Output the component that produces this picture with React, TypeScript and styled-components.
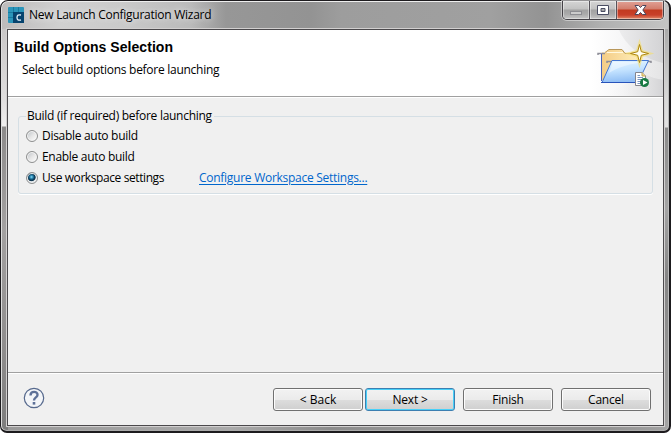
import React from 'react';
import styled, { createGlobalStyle, css } from 'styled-components';

const Global = createGlobalStyle`
  * { box-sizing: border-box; }
  html, body { margin: 0; background: #fff; }
  body { width: 671px; height: 433px; overflow: hidden; }
`;

const Label = styled.span<{ $spacing?: number }>`
  font: 12px/16px "Open Sans", "Noto Sans", sans-serif;
  letter-spacing: ${p => p.$spacing ?? -0.3}px;
  color: #000;
  white-space: nowrap;
`;

const Window = styled.div`
  width: 671px;
  height: 433px;
  border: 1px solid #1d1b1e;
  border-right-width: 2px;
  border-bottom-width: 2px;
  border-radius: 8px 8px 7px 7px;
  padding: 0 5px 5px 5px;
  display: flex;
  flex-direction: column;
  box-shadow: inset 0 1px #eee, inset 1px 0 #ddd, inset -1px 0 #bbb, inset 0 -1px #aaa;
  background:
    linear-gradient(#c9c7c7 0, #e0dede 70px, #f0efef 97px, #8d8b8b 98px, #a3a1a1 200px, #8f8d8d 320px, #777 100%) 0 28px / 7px 100% no-repeat,
    linear-gradient(#aaa 0, #d8d8d8 70px, #e2e2e2 98px, #8b8b8b 99px, #a4a4a4 180px, #858585 250px, #aaa 100%) 100% 28px / 7px 100% no-repeat,
    linear-gradient(90deg, #999, #aaa 230px, #8c8c8c 330px, #999 430px, #929292 600px, #a2a2a2) 0 100% / 100% 7px no-repeat,
    linear-gradient(90deg, #bdbbbb 0, #d0d0d0 60px, #cacaca 120px, #bababa 190px, #979797 225px, #939393 310px, #9d9d9d 340px, #a0a0a0 490px, #939393 545px, #b0b0b0 600px, #c4c4c4 100%);
`;

const TitleBar = styled.div`
  height: 28px;
  flex: none;
  display: flex;
  align-items: flex-start;
  padding-left: 2px;
`;

const AppIcon = styled.svg`
  width: 16px;
  height: 16px;
  margin: 6px 5px 0 0;
`;

const Title = styled(Label)`
  margin-top: 6px;
  letter-spacing: -0.26px;
  text-shadow: 0 0 6px #fff9, 0 0 10px #fff8;
`;

const Controls = styled.div`
  margin-left: auto;
  display: flex;
  height: 19px;
  border: 1px solid #454247;
  border-top: 0;
  border-radius: 0 0 5px 5px;
  box-shadow: 0 0 0 1px #e4e4e499;
  overflow: hidden;
`;

const Control = styled.div<{ $kind: 'min' | 'max' | 'close' }>`
  width: ${p => (p.$kind === 'close' ? 46 : 27)}px;
  display: flex;
  justify-content: center;
  padding-top: 2px;
  border-right: ${p => (p.$kind === 'close' ? '0' : '1px solid #56535a')};
  box-shadow: inset 0 1px #e6e6e6, inset 1px 0 #ffffff66, inset -1px -1px #ffffff66;
  background: ${p => p.$kind === 'close'
    ? 'linear-gradient(#e1a297 0, #d27d6c 8px, #c23a20 9px, #c8402a 14px, #e18a6a 100%)'
    : 'linear-gradient(#d5d5d5 0, #c2c2c2 8px, #a2a2a2 9px, #aaa 13px, #c6c6c6 100%)'};
`;

const Client = styled.main`
  flex: 1;
  border: 1px solid #4b494c;
  outline: 1px solid #d2d0d0;
  background: #f0f0f0;
  display: flex;
  flex-direction: column;
  min-height: 0;
  margin-left: 1px;
`;

const Header = styled.header`
  height: 67px;
  flex: none;
  display: flex;
  justify-content: space-between;
  background: #fff;
  border-bottom: 1px solid #a0a0a0;
`;

const Headings = styled.div`
  padding: 9px 0 0 6px;
  display: flex;
  flex-direction: column;
`;

const Heading = styled.h1`
  margin: 0;
  font: bold 14px/16px "Liberation Sans", Arial, sans-serif;
  letter-spacing: 0.05px;
  color: #000;
  white-space: nowrap;
`;

const Subtitle = styled(Label)`
  margin: 7px 0 0 8px;
`;

const Banner = styled.svg`
  width: 150px;
  height: 66px;
  display: block;
`;

const Body = styled.section`
  flex: 1;
  border-top: 1px solid #fff;
  padding: 10px 10px 0;
`;

const Group = styled.fieldset`
  margin: 0;
  min-width: 0;
  height: 86px;
  border: 1px solid #d5dfe5;
  border-radius: 3px;
  padding: 0 7px;
  box-shadow: 0 1px #fff;
`;

const Legend = styled.legend`
  padding: 0 2px 0 1px;
  height: 16px;
  display: flex;
`;

const Option = styled.label`
  display: flex;
  align-items: center;
  height: 21px;
  gap: 4px;
  position: relative;
  top: 1px;
`;

const Radio = styled.i<{ $on?: boolean }>`
  width: 12px;
  height: 12px;
  border-radius: 50%;
  border: 1px solid #8e8f8f;
  box-shadow: inset 0 0 0 1px #f4f4f4;
  background: ${p => p.$on
    ? 'radial-gradient(circle at 45% 40%, #8be0f8 0, #2f8ab4 1.5px, #0c4160 3px, #12344c 3.8px, #dce2e6 4.6px)'
    : 'linear-gradient(135deg, #b9bfc5, #e6e6e6 50%, #fff)'};
`;

const Link = styled.a`
  margin-left: 31px;
  font: 12px/16px "Open Sans", "Noto Sans", sans-serif;
  letter-spacing: -0.27px;
  color: #0066cc;
  text-decoration: underline;
  text-underline-offset: 2px;
  white-space: nowrap;
`;

const Footer = styled.footer`
  height: 53px;
  flex: none;
  border-top: 1px solid #a0a0a0;
  box-shadow: inset 0 1px #fff;
  display: flex;
  align-items: flex-start;
  padding: 15px 12px 0 15px;
`;

const Help = styled.svg`
  width: 22px;
  height: 22px;
  margin: -1px auto 0 0;
`;

const Button = styled.button<{ $primary?: boolean; $gap?: number }>`
  width: 90px;
  height: 23px;
  margin: 0 0 0 ${p => p.$gap ?? 0}px;
  padding: 1px 0 0;
  display: flex;
  align-items: center;
  justify-content: center;
  border: 1px solid #707070;
  border-radius: 3px;
  box-shadow: inset 0 0 0 1px #fcfcfc;
  background: linear-gradient(#f2f2f2 0, #ebebeb 50%, #dddddd 51%, #cfcfcf 100%);
  ${p => p.$primary && css`
    border-color: #3c7fb1;
    box-shadow: inset 0 0 0 1px #48d0f8;
  `}
`;

const LaunchBanner = () => (
  <Banner viewBox="0 0 150 66">
    <defs>
      <linearGradient id="sweep" x1="0" x2="1"><stop stopColor="#ededee" /><stop offset="1" stopColor="#d3d3d5" /></linearGradient>
      <linearGradient id="arc" x1="0" x2="1"><stop stopColor="#fff" /><stop offset=".45" stopColor="#f6f6f7" /><stop offset="1" stopColor="#e4e4e5" /></linearGradient>
      <linearGradient id="low" x1="0" x2="1"><stop stopColor="#fff" stopOpacity="0" /><stop offset="1" stopColor="#d4d4d6" /></linearGradient>
      <linearGradient id="front" x1="0" y1="0" x2=".2" y2="1"><stop stopColor="#e8f6ff" /><stop offset=".5" stopColor="#c4e3ff" /><stop offset="1" stopColor="#91bff5" /></linearGradient>
      <linearGradient id="back" x1="0" x2="1"><stop stopColor="#f4cd87" /><stop offset="1" stopColor="#fff0be" /></linearGradient>
    </defs>
    <rect x="78" width="72" height="66" fill="url(#arc)" />
    <path d="M106 0C113 16 129 28 150 33V0Z" fill="url(#sweep)" />
    <path d="M88 66C105 58 122 49 133 45Q142 49 150 50V66Z" fill="url(#low)" />
    <path d="M89 22.500H93L96 19.500H109L112 22.500H130V50H89Z" fill="url(#back)" />
    <path d="M92 22.500L96 19.500H109L112 23.500H130" fill="none" stroke="#b8975b" />
    <path d="M94 22.500H110" stroke="#fff8df" />
    <path d="M85 25V23.500H92M94 33V31.500H99M135 31.500H138V33" stroke="#8e8e98" strokeWidth="1.500" fill="none" />
    <path d="M88.500 24V51" stroke="#4662bd" />
    <path d="M99 30.500H135.500L125 52.500H89Z" fill="url(#front)" stroke="#4274d1" />
    <path d="M100 32H132C119 33 103 38 96 43Z" fill="#fff" opacity=".4" />
    <path d="M88 52.500H122" stroke="#2853ba" />
    <path d="M126.500 14L128.700 21.300 136 23.500 128.700 25.700 126.500 33 124.300 25.700 117 23.500 124.300 21.300Z" fill="#fffde0" stroke="#f4df75" strokeWidth="3" opacity=".65" />
    <path d="M126.500 14.500L128.300 21.700 135.500 23.500 128.300 25.300 126.500 32.500 124.700 25.300 117.500 23.500 124.700 21.700Z" fill="#fffef2" stroke="#ad850d" />
    <path d="M122.500 42.500H129L132.500 46V55.500H122.500Z" fill="#fff" stroke="#85858e" />
    <path d="M129 42.500V46H132.500" fill="#efd68c" stroke="#c5a850" />
    <path d="M124.500 45.500H127M124.500 47.500H130M124.500 49.500H129M124.500 51.500H128M124.500 53.500H128" stroke="#7b95bf" />
    <circle cx="131.500" cy="52.500" r="4.500" fill="#187a43" />
    <path d="M130 50V55L134.500 52.500Z" fill="#fff" />
  </Banner>
);

export default function App() {
  return (
    <>
      <Global />
      <Window>
        <TitleBar>
          <AppIcon viewBox="0 0 16 16">
            <rect width="16" height="16" rx="1" fill="#2b95ba" />
            <path d="M0 5.500H16M0 10.500H16M5.500 0V16M10.500 0V16" stroke="#0c6488" opacity=".55" />
            <rect x="5" y="5" width="11" height="11" fill="#06436e" />
            <path d="M13 8Q9 7 9 10.500Q9 14 13 13" fill="none" stroke="#e8f5ff" strokeWidth="1.300" />
          </AppIcon>
          <Title>New Launch Configuration Wizard</Title>
          <Controls>
            <Control $kind="min">
              <svg width="12" height="14"><rect x=".5" y="8.500" width="11" height="3" fill="#ccc" stroke="#8d8d92" /></svg>
            </Control>
            <Control $kind="max">
              <svg width="12" height="14"><path fillRule="evenodd" d="M.5 2.500H11.500V11.500H.5ZM4 5.500V8.500H8V5.500Z" fill="#fff" stroke="#4a4d62" /></svg>
            </Control>
            <Control $kind="close">
              <svg width="13" height="14"><path d="M1 2.500H4.500L6.500 4.500 8.500 2.500H12L8.800 7 12 11.500H8.500L6.500 9.500 4.500 11.500H1L4.200 7Z" fill="#fff" stroke="#4a465c" /></svg>
            </Control>
          </Controls>
        </TitleBar>
        <Client>
          <Header>
            <Headings>
              <Heading>Build Options Selection</Heading>
              <Subtitle $spacing={-0.27}>Select build options before launching</Subtitle>
            </Headings>
            <LaunchBanner />
          </Header>
          <Body>
            <Group>
              <Legend><Label $spacing={-0.28}>Build (if required) before launching</Label></Legend>
              <Option><Radio /><Label>Disable auto build</Label></Option>
              <Option><Radio /><Label>Enable auto build</Label></Option>
              <Option><Radio $on /><Label $spacing={-0.41}>Use workspace settings</Label><Link>Configure Workspace Settings...</Link></Option>
            </Group>
          </Body>
          <Footer>
            <Help viewBox="0 0 22 22">
              <circle cx="11" cy="11" r="9.700" fill="#f3f5f8" stroke="#56698d" strokeWidth="1.200" />
              <path d="M7.500 8.500C7.500 3.500 14.800 4 14.500 8C14.300 10.500 11 10.300 11 13.500" fill="none" stroke="#5e7198" strokeWidth="2.400" />
              <rect x="9.700" y="15" width="2.600" height="2.600" fill="#5e7198" />
            </Help>
            <Button><Label $spacing={0}>&lt; Back</Label></Button>
            <Button $primary $gap={2}><Label $spacing={-0.2}>Next &gt;</Label></Button>
            <Button $gap={8}><Label $spacing={-0.2}>Finish</Label></Button>
            <Button $gap={8}><Label $spacing={-0.2}>Cancel</Label></Button>
          </Footer>
        </Client>
      </Window>
    </>
  );
}
